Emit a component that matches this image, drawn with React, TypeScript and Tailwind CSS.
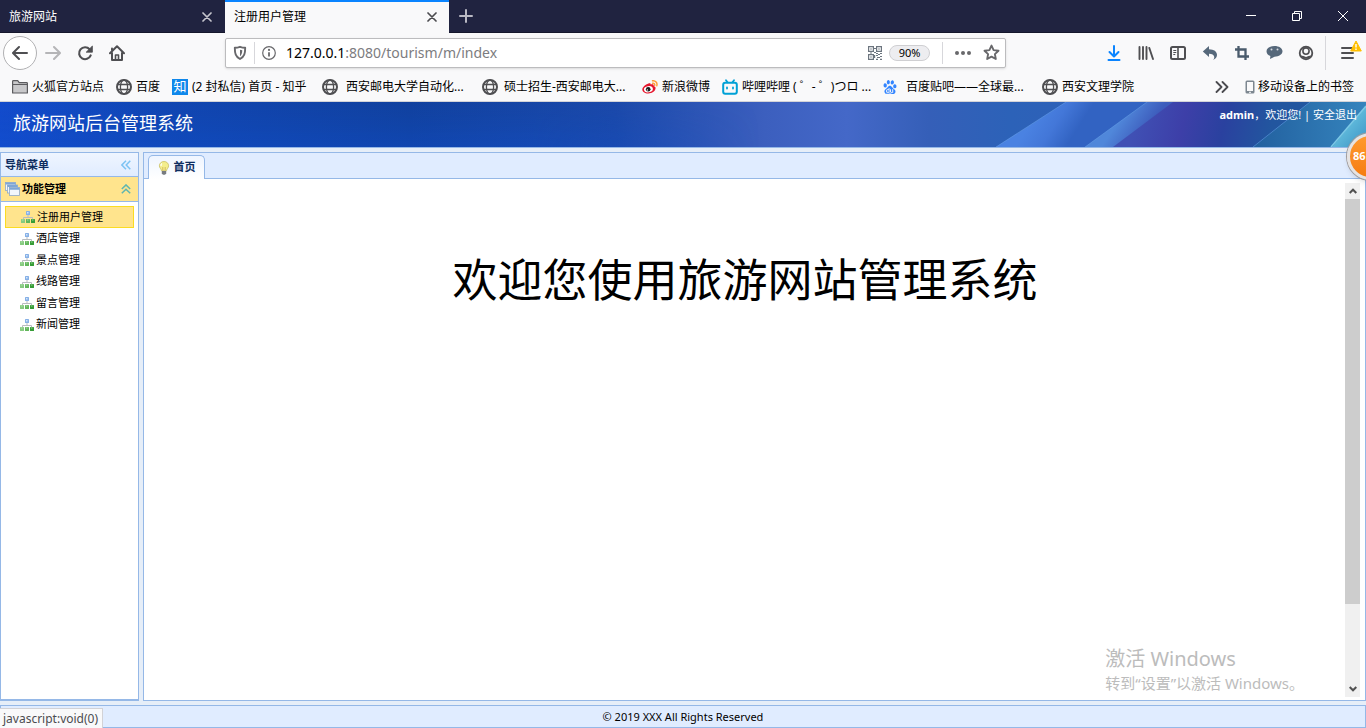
import React, { useState } from 'react';
import { SiBaidu } from 'react-icons/si';

type IconProps = { className?: string };

const BackIcon = () => (
  <svg width="16" height="16" viewBox="0 0 16 16" fill="none" stroke="currentColor" strokeWidth="2" strokeLinecap="round" strokeLinejoin="round">
    <path d="M15 8H1.5M7 2 1 8l6 6" />
  </svg>
);

const ForwardIcon = () => (
  <svg width="16" height="16" viewBox="0 0 16 16" fill="none" stroke="currentColor" strokeWidth="2" strokeLinecap="round" strokeLinejoin="round">
    <path d="M1 8h13.5M9 2l6 6-6 6" />
  </svg>
);

const ReloadIcon = () => (
  <svg width="16" height="16" viewBox="0 0 16 16">
    <path d="M12.6 4.2A6 6 0 1 0 13.7 10.4" fill="none" stroke="currentColor" strokeWidth="2.1" strokeLinecap="round" />
    <path d="M15.4 1v6.2h-6.2z" fill="currentColor" stroke="currentColor" strokeWidth="0.8" strokeLinejoin="round" />
  </svg>
);

const HomeIcon = () => (
  <svg width="16" height="16" viewBox="0 0 16 16" fill="none" stroke="currentColor" strokeWidth="2" strokeLinecap="round" strokeLinejoin="round">
    <path d="M1 8.2 8 1.2l7 7M3 8v7h10V8" />
    <path d="M6.5 15v-5h3v5" strokeWidth="1.6" />
    <path d="M3 3.5v1.5" />
  </svg>
);

const ShieldIcon = () => (
  <svg width="14" height="16" viewBox="0 0 14 16">
    <path d="M7 1.8c2 .7 3.800.9 5.200.9 0 5.600-.8 8.800-5.200 11.300C2.600 11.500 1.800 8.300 1.800 2.700 3.200 2.700 5 2.500 7 1.800z" fill="none" stroke="currentColor" strokeWidth="1.900" strokeLinejoin="round" />
    <path d="M7 4.700v6.500c1.600-1.400 2.200-3 2.300-6-.9 0-1.600-.2-2.300-.5z" fill="currentColor" />
  </svg>
);

const InfoIcon = () => (
  <svg width="14" height="14" viewBox="0 0 14 14">
    <circle cx="7" cy="7" r="6.300" fill="none" stroke="currentColor" strokeWidth="1.200" />
    <path d="M7 6.200v4.300" stroke="currentColor" strokeWidth="1.800" />
    <circle cx="7" cy="3.900" r="1.100" fill="currentColor" />
  </svg>
);

const QrIcon = () => (
  <svg width="14" height="14" viewBox="0 0 14 14" fill="none" stroke="currentColor" strokeWidth="1.200">
    <path d="M.6.6h4.800v4.800H.6zM8.600.6h4.800v4.800H8.600zM.6 8.600h4.800v4.800H.6z" />
    <path d="M2.200 3h1.600M10.200 3h1.600M2.200 11h1.600M8 7.500h2M12 7.500h2M10 8.500h2M8 9.500h2M12 10.500h2M9 11.500h3M8 13.400h2M12 13.400h2M6 2.500h2M6 6.500h2M6.600 9v3M2 7h2" />
  </svg>
);

const StarIcon = () => (
  <svg width="17" height="17" viewBox="0 0 17 17">
    <path d="m8.500 1.600 2.100 4.500 4.900.6-3.600 3.400.9 4.900-4.300-2.400L4.200 15l.9-4.900L1.500 6.700l4.900-.6z" fill="none" stroke="currentColor" strokeWidth="1.900" strokeLinejoin="round" />
  </svg>
);

const DownloadIcon = () => (
  <svg width="16" height="16" viewBox="0 0 16 16" fill="none" stroke="#0a84ff" strokeWidth="2" strokeLinecap="round" strokeLinejoin="round">
    <path d="M8 1v10M3.500 7 8 11.500 12.500 7M2.500 15h11" />
  </svg>
);

const LibraryIcon = () => (
  <svg width="16" height="16" viewBox="0 0 16 16" fill="none" stroke="currentColor" strokeLinecap="round">
    <path d="M1.500 2v12M5 2v12M8.500 2v12M11.300 3l3.700 11" strokeWidth="1.900" />
  </svg>
);

const SidebarIcon = () => (
  <svg width="16" height="16" viewBox="0 0 16 16" fill="none" stroke="currentColor">
    <rect x="1" y="2" width="14" height="12" rx="1.500" strokeWidth="2" />
    <path d="M8 2v12" strokeWidth="1.600" />
    <path d="M3.300 5.500h3M3.300 7.500h3M3.300 9.500h2" />
  </svg>
);

const UndoIcon = () => (
  <svg width="16" height="16" viewBox="0 0 16 16" fill="#56687a">
    <path d="M7 1v3.200c5 .1 8 2.300 8 5.800 0 2.200-1.500 4-4 5 1-1 1.400-2 1.200-3.200C11.900 9.800 10 8.800 7 8.800V12L.8 6.500z" />
  </svg>
);

const CropIcon = () => (
  <svg width="16" height="16" viewBox="0 0 16 16" fill="none" stroke="#4a5b6c" strokeWidth="2.300">
    <path d="M4.500 1v10.500H15M1 4.500h10.500V15" />
  </svg>
);

const ChatIcon = () => (
  <svg width="17" height="15" viewBox="0 0 17 15">
    <path d="M8.500 1C13 1 16.500 3.200 16.500 6.300s-3.500 5.400-8 5.400L4 14l.4-2.900C2 10.200.5 8.500.5 6.300.5 3.200 4 1 8.500 1z" fill="#56687a" />
    <circle cx="5.500" cy="4.500" r="1" fill="#d5dae0" />
    <circle cx="11.500" cy="4.500" r="1" fill="#d5dae0" />
  </svg>
);

const AccountIcon = () => (
  <svg width="16" height="16" viewBox="0 0 16 16" fill="none" stroke="currentColor">
    <circle cx="8" cy="8" r="6.300" strokeWidth="1.800" />
    <path d="M4.900 6a3.100 3.100 0 0 1 6.200 0c0 2-1.400 3.200-3.100 3.200S4.900 8 4.900 6z" strokeWidth="1.600" />
    <path d="M2.800 10.500C4 13 6 13.800 8 13.800s4-.8 5.200-3.300L10.500 11 8 12l-2.500-1z" fill="currentColor" stroke="none" />
  </svg>
);

const FolderIcon = () => (
  <svg width="16" height="16" viewBox="0 0 16 16" className="shrink-0">
    <path d="M.6 14V2.400c0-.4.3-.8.8-.8h4.300l1.500 2h7.300c.5 0 .9.3.9.8V14z" fill="#c8c8ca" stroke="#5b5b5e" strokeWidth="1.200" strokeLinejoin="round" />
    <path d="M1 5.500h14" stroke="#5b5b5e" />
  </svg>
);

const GlobeIcon = () => (
  <svg width="16" height="16" viewBox="0 0 16 16" fill="none" stroke="#4f4f52" strokeWidth="1.300" className="shrink-0">
    <circle cx="8" cy="8" r="7" strokeWidth="2" />
    <ellipse cx="8" cy="8" rx="3.600" ry="7" />
    <path d="M1.500 5.500h13M1.500 10.500h13" />
  </svg>
);

const ZhihuIcon = () => (
  <span className="flex size-4 shrink-0 items-center justify-center bg-[#0f88eb] text-[13px] text-white">知</span>
);

const WeiboIcon = () => (
  <svg width="16" height="16" viewBox="0 0 16 16" className="shrink-0">
    <path d="M6.500 4.500c1-.4 2.300-.4 2.200 1 1.700-.6 3.500-.3 3 1.500 1.400.4 2.200 1.400 1.800 2.800C12.800 12.500 10 14.500 6.300 14.500 2.700 14.500.3 12.800.3 10.500c0-2.200 3-5 6.200-6z" fill="#e6162d" />
    <ellipse cx="6.400" cy="10.200" rx="4.500" ry="3.100" fill="#fff" transform="rotate(-8 6.400 10.200)" />
    <circle cx="6.200" cy="10.300" r="2.300" fill="#1c1c1c" />
    <circle cx="5.400" cy="10.900" r=".7" fill="#fff" />
    <path d="M10.500 1.800c3-.5 5.200 2 4.300 5M10.600 4.200c1.500-.2 2.500.8 2.100 2.200" fill="none" stroke="#ff9933" strokeWidth="1.400" strokeLinecap="round" />
  </svg>
);

const BilibiliIcon = () => (
  <svg width="16" height="16" viewBox="0 0 16 16" fill="none" stroke="#00a1d6" strokeWidth="2" strokeLinecap="round" className="shrink-0">
    <rect x="1.200" y="3.800" width="13.600" height="11" rx="2" />
    <path d="m4 1.200 1.500 2M12 1.200l-1.500 2M5 8.500v1M11 8.500v1" strokeWidth="1.800" />
  </svg>
);

const PhoneIcon = () => (
  <svg width="10" height="14" viewBox="0 0 10 14" className="shrink-0">
    <rect x=".5" y=".5" width="9" height="13" rx="1.500" fill="#7d8790" />
    <rect x="2" y="2" width="6" height="9" fill="#f9f9fa" />
    <rect x="4" y="11.800" width="2" height="1" fill="#f9f9fa" />
  </svg>
);

const TreeIcon = () => (
  <svg width="14" height="12" viewBox="0 0 14 12" className="shrink-0">
    <path d="M7 4v2.500M2.500 8v-1.500h9v1.500" fill="none" stroke="#b9bcc0" />
    <rect x="5" y="0" width="4" height="4" rx=".6" fill="#86b0e6" />
    <rect x="6" y="1" width="1.500" height="1.500" fill="#d4e6fb" />
    <rect x="0" y="8" width="4" height="4" rx=".5" fill="#86cb80" />
    <rect x="5" y="8" width="4" height="4" rx=".5" fill="#62b65b" />
    <rect x="10" y="8" width="4" height="4" rx=".5" fill="#369c36" />
    <path d="M1 9h1.500M6 9h1.500M11 9h1.500" stroke="#c8ebc2" strokeOpacity=".7" />
  </svg>
);

const WindowsIcon = () => (
  <svg width="15" height="14" viewBox="0 0 15 14" className="shrink-0">
    <g fill="#f2f6fb" stroke="#8fa9c6" strokeWidth=".8">
      <rect x=".5" y=".5" width="10" height="8" />
      <rect x="2.500" y="3" width="10" height="8" />
      <rect x="4.500" y="5.500" width="10" height="8" />
    </g>
    <path d="M.5 1.500h10M2.500 4h10M4.500 6.700h10" stroke="#7ea6d6" strokeWidth="2" />
  </svg>
);

const BulbIcon = () => (
  <svg width="12" height="14" viewBox="0 0 12 14" className="shrink-0">
    <path d="M6 .5c2.700 0 4.600 1.900 4.600 4.300 0 2.100-1.800 3-2.100 5H3.500c-.3-2-2.100-2.900-2.100-5C1.400 2.400 3.300.5 6 .5z" fill="#f4ee8c" stroke="#c9bf63" strokeWidth=".8" />
    <path d="M4 2.500c-1 .6-1.200 1.600-.9 2.600" stroke="#fff" strokeWidth="1.200" fill="none" />
    <path d="M4.800 9.500V6M7.200 9.500V6" stroke="#c9a94e" strokeWidth=".7" />
    <path d="M3.800 10h4.400v2.500L7 13.800H5l-1.200-1.300z" fill="#777b80" />
  </svg>
);

const DoubleChevron = ({ className }: IconProps) => (
  <svg width="10" height="10" viewBox="0 0 10 10" fill="none" stroke="currentColor" strokeWidth="1.500" className={className}>
    <path d="M5 .8.900 5 5 9.200M9.300.8 5.200 5l4.100 4.200" />
  </svg>
);

const CloseIcon = () => (
  <svg width="10" height="10" viewBox="0 0 10 10" stroke="currentColor" strokeWidth="1.700" strokeLinecap="round">
    <path d="m1 1 8 8M9 1 1 9" />
  </svg>
);

// decorative light beams on the right half of the banner
const BannerArt = () => (
  <svg className="absolute inset-0 h-full w-full" viewBox="0 0 1366 45" preserveAspectRatio="xMaxYMid slice" aria-hidden="true">
    <defs>
      <linearGradient id="base">
        <stop offset="0" stopColor="#134bcc" />
        <stop offset=".12" stopColor="#1146b2" />
        <stop offset=".3" stopColor="#11419f" />
        <stop offset=".45" stopColor="#1b49aa" />
        <stop offset=".56" stopColor="#3c5fbe" />
        <stop offset=".62" stopColor="#4468c8" />
        <stop offset=".68" stopColor="#355fb8" />
        <stop offset=".74" stopColor="#2c62b8" />
        <stop offset=".8" stopColor="#2f60b8" />
      </linearGradient>
      <linearGradient id="depth" x2="0" y2="1">
        <stop offset="0" stopColor="#1050c8" stopOpacity="0" />
        <stop offset="1" stopColor="#1050d0" stopOpacity=".35" />
      </linearGradient>
      <linearGradient id="fade">
        <stop offset=".7" stopColor="#fff" />
        <stop offset="1" stopColor="#000" />
      </linearGradient>
      <mask id="left">
        <rect width="760" height="45" fill="url(#fade)" />
      </mask>
      <linearGradient id="beam" gradientUnits="userSpaceOnUse" x1="1030" y1="22" x2="1066" y2="45">
        <stop offset="0" stopColor="#4a82e2" />
        <stop offset=".5" stopColor="#4377d8" />
        <stop offset="1" stopColor="#3263c2" />
      </linearGradient>
      <linearGradient id="beam2" gradientUnits="userSpaceOnUse" x1="1117" y1="22" x2="1140" y2="38">
        <stop offset="0" stopColor="#5087da" />
        <stop offset="1" stopColor="#3d5cbc" />
      </linearGradient>
      <linearGradient id="violet" gradientUnits="userSpaceOnUse" x1="1140" y1="0" x2="1270" y2="30">
        <stop offset="0" stopColor="#4050b4" />
        <stop offset=".35" stopColor="#3d3fa8" />
        <stop offset=".65" stopColor="#2a419f" />
        <stop offset="1" stopColor="#22569f" />
      </linearGradient>
      <linearGradient id="teal">
        <stop offset="0" stopColor="#22609f" />
        <stop offset="1" stopColor="#3584bd" />
      </linearGradient>
      <linearGradient id="corner" gradientUnits="userSpaceOnUse" x1="1346" y1="22" x2="1366" y2="40">
        <stop offset="0" stopColor="#62bcdc" />
        <stop offset="1" stopColor="#3f97c8" />
      </linearGradient>
    </defs>
    <rect width="1366" height="45" fill="url(#base)" />
    <rect width="760" height="45" fill="url(#depth)" mask="url(#left)" />
    <path d="M996 45 1066 0h81l-62 45z" fill="url(#beam)" />
    <path d="M1085 45 1147 0h34l-64 45z" fill="url(#beam2)" />
    <path d="M1113 45 1173 0h137l-57 45z" fill="url(#violet)" />
    <path d="M1253 45 1310 0h56v45z" fill="url(#teal)" />
    <path d="M1332 45 1366 4v41z" fill="url(#corner)" />
    <path d="m996 45 70-45M1085 45l62-45M1253 45l57-45" stroke="#6fa8ee" strokeOpacity=".45" />
    <path d="m1331 45 35-41" stroke="#7cc9e6" strokeWidth="1.500" />
  </svg>
);

const bookmarks = [
  { icon: <FolderIcon />, label: '火狐官方站点', width: 'w-[104px]', gap: 'gap-1' },
  { icon: <GlobeIcon />, label: '百度', width: 'w-[56px]', gap: 'gap-1' },
  { icon: <ZhihuIcon />, label: '(2 封私信) 首页 - 知乎', width: 'w-[150px]', gap: 'gap-1' },
  { icon: <GlobeIcon />, label: '西安邮电大学自动化...', width: 'w-[160px]', gap: 'gap-2' },
  { icon: <GlobeIcon />, label: '硕士招生-西安邮电大...', width: 'w-[160px]', gap: 'gap-1.5' },
  { icon: <WeiboIcon />, label: '新浪微博', width: 'w-[80px]', gap: 'gap-1' },
  { icon: <BilibiliIcon />, label: '哔哩哔哩 ( ゜- ゜)つロ ...', width: 'w-[160px]', gap: 'gap-1' },
  { icon: <SiBaidu size={14} className="mx-px shrink-0 text-[#3385ff]" />, label: '百度贴吧——全球最...', width: 'w-[160px]', gap: 'gap-2' },
  { icon: <GlobeIcon />, label: '西安文理学院', width: 'w-[104px]', gap: 'gap-1' },
];

const menuItems = ['注册用户管理', '酒店管理', '景点管理', '线路管理', '留言管理', '新闻管理'];

const tools = [
  { label: '下载', icon: <DownloadIcon /> },
  { label: '书库', icon: <LibraryIcon /> },
  { label: '侧栏', icon: <SidebarIcon /> },
  { label: '撤销', icon: <UndoIcon /> },
  { label: '截图', icon: <CropIcon /> },
  { label: '消息', icon: <ChatIcon /> },
  { label: '账户', icon: <AccountIcon /> },
];

const TabStrip = () => (
  <div className="flex h-[33px] shrink-0 border-b border-[#15172c] bg-[#202340] text-xs">
    <div className="flex w-[225px] items-center justify-between pt-px pr-[13px] pl-[9px] text-white">
      <span>旅游网站</span>
      <button aria-label="关闭标签页" className="text-[#c5c5cd]"><CloseIcon /></button>
    </div>
    <div className="-mb-px flex w-[224px] items-center justify-between border-t-2 border-[#0a84ff] bg-[#f9f9fa] pr-[12px] pb-px pl-[9px] text-black">
      <span>注册用户管理</span>
      <button aria-label="关闭标签页" className="text-[#4b4b4f]"><CloseIcon /></button>
    </div>
    <button aria-label="新建标签页" className="ml-[10px] text-[#b9b9c3]">
      <svg width="14" height="14" viewBox="0 0 14 14" stroke="currentColor" strokeWidth="2" strokeLinecap="round">
        <path d="M7 1v12M1 7h12" />
      </svg>
    </button>
    <div className="ml-auto flex text-white">
      <button aria-label="最小化" className="flex w-[46px] items-center justify-center">
        <svg width="10" height="10" viewBox="0 0 10 10" stroke="currentColor"><path d="M0 4.500h10" /></svg>
      </button>
      <button aria-label="还原" className="flex w-[46px] items-center justify-center">
        <svg width="10" height="10" viewBox="0 0 10 10" fill="none" stroke="currentColor"><path d="M.5 2.500h7v7h-7zM2.500 2.500v-2h7v7h-2" /></svg>
      </button>
      <button aria-label="关闭" className="flex w-[46px] items-center justify-center">
        <svg width="10" height="10" viewBox="0 0 10 10" stroke="currentColor"><path d="m0 0 10 10M10 0 0 10" /></svg>
      </button>
    </div>
  </div>
);

const Toolbar = () => (
  <div className="flex h-[39px] shrink-0 items-center bg-[#f9f9fa] text-[#4f4f52]">
    <button aria-label="后退" className="ml-[3px] flex size-[34px] items-center justify-center rounded-full border border-[#b1b1b3] bg-white">
      <BackIcon />
    </button>
    <button aria-label="前进" className="flex w-8 justify-center text-[#b5b5b7]"><ForwardIcon /></button>
    <button aria-label="刷新" className="flex w-8 justify-center"><ReloadIcon /></button>
    <button aria-label="主页" className="flex w-8 justify-center"><HomeIcon /></button>

    <div className="mx-[92px] flex h-[30px] min-w-0 flex-1 items-center rounded-xs border border-[#bcbcbe] bg-white pl-[7px] text-[#68686b] shadow-sm">
      <ShieldIcon />
      <span className="ml-[7px] h-[22px] w-px bg-[#d7d7db]" />
      <span className="ml-[7px]"><InfoIcon /></span>
      <div className="ml-[10px] flex-1 truncate text-sm text-[#7c7c80]"><span className="text-black">127.0.0.1</span>:8080/tourism/m/index</div>
      <span className="text-[#6c757f]"><QrIcon /></span>
      <button className="ml-[7px] h-4 w-[41px] rounded-full border border-[#cfcfd2] bg-[#ededf0] text-[11px] leading-[14px] text-black">90%</button>
      <span className="mx-3 h-[22px] w-px bg-[#d7d7db]" />
      <button aria-label="页面操作">
        <svg width="16" height="4" viewBox="0 0 16 4" fill="currentColor">
          <circle cx="2" cy="2" r="2" /><circle cx="8" cy="2" r="2" /><circle cx="14" cy="2" r="2" />
        </svg>
      </button>
      <button aria-label="收藏" className="mr-[5px] ml-3"><StarIcon /></button>
    </div>

    {tools.map(tool => (
      <button key={tool.label} aria-label={tool.label} className="flex w-8 justify-center">
        {tool.icon}
      </button>
    ))}
    <span className="ml-[3px] h-[34px] w-px bg-[#d7d7db]" />
    <button aria-label="菜单" className="relative mr-3 ml-[15px]">
      <svg width="13" height="14" viewBox="0 0 13 14" stroke="currentColor" strokeWidth="2" strokeLinecap="round">
        <path d="M1 2h10M1 7h11M1 12h11" />
      </svg>
      <svg width="12" height="12" viewBox="0 0 12 12" className="absolute -top-[6px] left-[9px]">
        <path d="M6 1 11.300 11H.7z" fill="#ffbf00" stroke="#ffbf00" strokeLinejoin="round" />
        <path d="M6 4v3.500M6 8.500V10" stroke="#fff" strokeWidth="1.400" />
      </svg>
    </button>
  </div>
);

const BookmarksBar = () => (
  <div className="flex h-[30px] shrink-0 items-center border-b border-[#d4d4d8] bg-[#f9f9fa] pt-px pl-3 text-xs whitespace-nowrap text-black">
    {bookmarks.map(mark => (
      <a key={mark.label} href="#" className={`flex shrink-0 items-center ${mark.width} ${mark.gap}`}>
        {mark.icon}
        {mark.label}
      </a>
    ))}
    <button aria-label="更多书签" className="mr-4 ml-auto text-[#4b4b4f]">
      <svg width="14" height="12" viewBox="0 0 14 12" fill="none" stroke="currentColor" strokeWidth="1.800" strokeLinecap="round" strokeLinejoin="round">
        <path d="m1.500 1 5 5-5 5M7.500 1l5 5-5 5" />
      </svg>
    </button>
    <a href="#" className="mr-3 flex items-center gap-[3px]">
      <PhoneIcon />
      移动设备上的书签
    </a>
  </div>
);

const Banner = () => (
  <header className="relative flex h-[46px] shrink-0 justify-between border-b border-[#95b8e7] text-white">
    <BannerArt />
    <h1 className="relative pl-[13px] text-lg leading-[42px]">旅游网站后台管理系统</h1>
    <div className="relative pt-[5px] pr-[9px] text-[11px] leading-4">
      <b>admin</b>，欢迎您! | <a href="#">安全退出</a>
    </div>
  </header>
);

interface SidebarProps {
  active: string;
  onSelect: (name: string) => void;
}

const Sidebar = ({ active, onSelect }: SidebarProps) => (
  <nav className="flex w-[139px] shrink-0 flex-col border border-b-2 border-[#95b8e7] bg-white text-[11px]">
    <div className="flex h-6 items-center justify-between border-b border-[#95b8e7] bg-linear-to-b from-[#eff5ff] to-[#e0ecff] pt-px pr-[7px] pl-1 font-bold text-[#0e2d5f]">
      导航菜单
      <button aria-label="折叠" className="text-[#7cc3f3]"><DoubleChevron /></button>
    </div>
    <div className="flex h-[25px] items-center border-b border-[#95b8e7] bg-[#ffe48d] pr-[7px] pl-1 font-bold text-black">
      <WindowsIcon />
      <span className="ml-0.5 flex-1">功能管理</span>
      <button aria-label="收起" className="text-[#5fb5b0]"><DoubleChevron className="rotate-90" /></button>
    </div>
    <ul className="p-1">
      {menuItems.map(name => (
        <li key={name} className="odd:h-[22px] even:h-[21px]">
          <a
            href="#"
            onClick={() => onSelect(name)}
            className={`flex h-full items-center gap-0.5 pl-[15px] text-black ${
              active === name ? 'border border-[#fbdc22] bg-[#ffe48d]' : ''
            }`}
          >
            <TreeIcon />
            {name}
          </a>
        </li>
      ))}
    </ul>
  </nav>
);

const ScrollBar = () => (
  <div className="flex w-[15px] shrink-0 flex-col bg-[#f0f0f0] text-[#505050]">
    <button aria-label="向上滚动" className="flex h-4 items-center justify-center">
      <svg width="8" height="6" viewBox="0 0 8 6" fill="none" stroke="currentColor" strokeWidth="2"><path d="M.7 5 4 1.700 7.300 5" /></svg>
    </button>
    <div className="flex-1">
      <div className="h-[84%] bg-[#cdcdcd]" />
    </div>
    <button aria-label="向下滚动" className="flex h-4 items-center justify-center">
      <svg width="8" height="6" viewBox="0 0 8 6" fill="none" stroke="currentColor" strokeWidth="2"><path d="M.7 1 4 4.300 7.300 1" /></svg>
    </button>
  </div>
);

export default function App() {
  const [active, setActive] = useState('注册用户管理');

  return (
    <div className="relative flex h-screen flex-col overflow-hidden bg-[#e6eef8] font-['Noto_Sans','Noto_Sans_CJK_SC',sans-serif]">
      <TabStrip />
      <Toolbar />
      <BookmarksBar />
      <Banner />

      <div className="flex min-h-0 flex-1 gap-1 py-1">
        <Sidebar active={active} onSelect={setActive} />
        <main className="flex min-w-0 flex-1 flex-col border border-[#95b8e7] bg-white">
          <div className="flex h-[26px] shrink-0 items-end border-b border-[#95b8e7] bg-[#e0ecff] pl-1">
            <button className="-mb-px flex h-6 w-[57px] items-center justify-center gap-1 rounded-t-[5px] border border-b-0 border-[#95b8e7] bg-linear-to-b from-[#eff5ff] to-white text-[11px] font-bold text-[#0e2d5f]">
              <BulbIcon />
              首页
            </button>
          </div>
          <div className="flex min-h-0 flex-1 pt-1 pr-[5px] pb-[3px] pl-px">
            <div className="flex-1 pt-[64px] text-center text-[45px] leading-[66px] text-black">
              欢迎您使用旅游网站管理系统
            </div>
            <ScrollBar />
          </div>
        </main>
      </div>

      <footer className="h-[23px] shrink-0 border border-[#95b8e7] bg-[#e0ecff] text-center text-[11px] leading-[21px] text-black">
        © 2019 XXX All Rights Reserved
      </footer>

      <div className="absolute bottom-0 left-0 h-5 border-t border-r border-[#d2d2d6] bg-[#f9f9fa] pr-1 pl-[3px] text-xs leading-[20px] text-[#4b4b4f]">
        javascript:void(0)
      </div>
      <div className="absolute top-[133px] -right-[28px] flex size-[47px] items-center rounded-full border-[3px] border-[#e6e3e2] bg-linear-to-b from-[#ff9a2e] to-[#f57c0e] pl-[3px] text-[11px] font-bold text-white shadow-md ring-1 ring-[#a09a98]">
        86
      </div>
      <div className="pointer-events-none absolute right-[62px] bottom-[34px] text-[#bcbcbc]">
        <p className="text-xl leading-[26px]">激活 Windows</p>
        <p className="text-[15px] leading-[22px]">转到“设置”以激活 Windows。</p>
      </div>
    </div>
  );
}
